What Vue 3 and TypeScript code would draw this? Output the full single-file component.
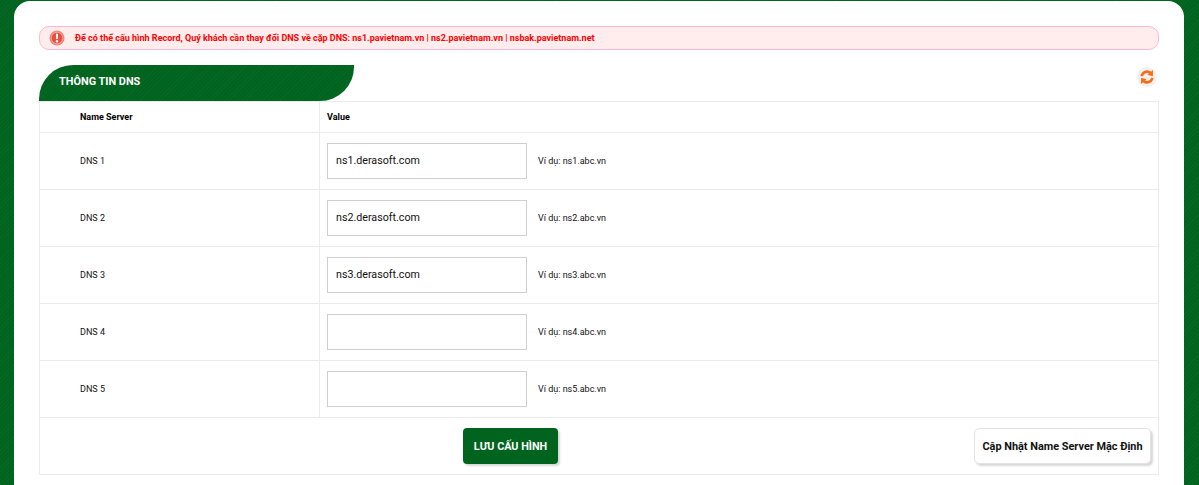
<script setup lang="ts">
const rows = [
  { name: 'DNS 1', value: 'ns1.derasoft.com', hint: 'Ví dụ: ns1.abc.vn' },
  { name: 'DNS 2', value: 'ns2.derasoft.com', hint: 'Ví dụ: ns2.abc.vn' },
  { name: 'DNS 3', value: 'ns3.derasoft.com', hint: 'Ví dụ: ns3.abc.vn' },
  { name: 'DNS 4', value: '', hint: 'Ví dụ: ns4.abc.vn' },
  { name: 'DNS 5', value: '', hint: 'Ví dụ: ns5.abc.vn' },
]
</script>

<template>
  <div class="page">
    <div class="card">
      <div class="alert">
        <svg class="alert-icon" width="16" height="16" viewBox="0 0 16 16">
          <circle cx="8" cy="8" r="7.5" fill="#f0837a" />
          <circle cx="8" cy="8" r="5.8" fill="#e8503f" stroke="#f8b0a8" stroke-width="0.8" />
          <rect x="7" y="3.6" width="2" height="5.6" rx="0.9" fill="#fff" />
          <circle cx="8" cy="11.2" r="1.2" fill="#fff" />
        </svg>
        <span>Để có thể cấu hình Record, Quý khách cần thay đổi DNS về cặp DNS: ns1.pavietnam.vn | ns2.pavietnam.vn | nsbak.pavietnam.net</span>
      </div>

      <div class="section-head">
        <div class="tab">THÔNG TIN DNS</div>
        <div class="refresh">
          <svg width="16" height="16" viewBox="0 0 18 18" fill="none">
            <path d="M3 8 A6 6 0 0 1 13 4.6" stroke="#ff6a13" stroke-width="3" />
            <path d="M15.8 1.2 L15.6 8.2 L9.4 6.6 Z" fill="#ff6a13" />
            <path d="M15 10 A6 6 0 0 1 5 13.4" stroke="#ff6a13" stroke-width="3" />
            <path d="M2.2 16.8 L2.4 9.8 L8.6 11.4 Z" fill="#ff6a13" />
          </svg>
        </div>
      </div>

      <table class="dns">
        <thead>
          <tr>
            <th class="col-name">Name Server</th>
            <th class="col-value">Value</th>
          </tr>
        </thead>
        <tbody>
          <tr v-for="row in rows" :key="row.name">
            <td class="col-name">{{ row.name }}</td>
            <td class="col-value">
              <div class="field">
                <input class="input" type="text" :value="row.value" />
                <span class="hint">{{ row.hint }}</span>
              </div>
            </td>
          </tr>
          <tr>
            <td colspan="2" class="actions-cell">
              <div class="actions">
                <button class="btn-save" type="button">LƯU CẤU HÌNH</button>
                <button class="btn-default" type="button">Cập Nhật Name Server Mặc Định</button>
              </div>
            </td>
          </tr>
        </tbody>
      </table>
    </div>
  </div>
</template>

<style>
html, body {
  margin: 0;
  height: 100%;
  overflow: hidden;
  background: #00641f;
}
</style>

<style scoped>
.page {
  height: 485px;
  box-sizing: border-box;
  padding: 1px 15px 0 14px;
  overflow: hidden;
  font-family: Roboto, "Liberation Sans", sans-serif;
  background-color: #00641f;
  background-image: repeating-linear-gradient(135deg, rgba(255, 255, 255, 0.025) 0 1px, transparent 1px 3px);
}
.card {
  background: #fff;
  border-radius: 16px 16px 0 0;
  padding: 25px 25px 40px;
  height: 600px;
  box-sizing: border-box;
}
.alert {
  height: 24px;
  box-sizing: border-box;
  border: 1px solid #ffb8d4;
  border-radius: 10px;
  background: #ffecec;
  color: #ff0000;
  font-size: 9px;
  font-weight: 700;
  display: flex;
  align-items: center;
  padding-left: 9px;
  gap: 10px;
}
.alert-icon {
  flex: none;
}
.section-head {
  margin-top: 15px;
  display: flex;
  justify-content: space-between;
  height: 36px;
}
.tab {
  width: 315px;
  height: 36px;
  box-sizing: border-box;
  padding-left: 20px;
  line-height: 34px;
  color: #fff;
  font-size: 10.9px;
  font-weight: 700;
  border-radius: 34px 0 34px 0;
  background-color: #00641f;
  background-image: repeating-linear-gradient(135deg, rgba(255, 255, 255, 0.025) 0 1px, transparent 1px 3px);
}
.refresh {
  width: 20px;
  height: 20px;
  margin: 2px 2px 0 0;
  border-radius: 50%;
  background: #f1f1f1;
  display: flex;
  align-items: center;
  justify-content: center;
}
.dns {
  width: 100%;
  table-layout: fixed;
  border-collapse: collapse;
  font-size: 9px;
  color: #111;
}
.dns th,
.dns td {
  border: 1px solid #ebebeb;
  padding: 0;
  text-align: left;
}
.dns th {
  height: 30px;
  font-weight: 700;
  color: #000;
}
.dns td {
  height: 56px;
}
.col-name {
  width: 280px;
  padding-left: 40px !important;
  box-sizing: border-box;
}
.col-value {
  padding-left: 7px !important;
}
.field {
  display: flex;
  align-items: center;
  gap: 11px;
}
.input {
  width: 200px;
  height: 36px;
  box-sizing: border-box;
  border: 1px solid #cfcfcf;
  padding: 0 9px 2px 8px;
  margin: 0;
  outline: none;
  font-family: Roboto, "Liberation Sans", sans-serif;
  font-size: 10.7px;
  color: #111;
  background: #fff;
}
.hint {
  color: #111;
}
.actions-cell {
  height: 56px;
}
.actions {
  display: flex;
  align-items: center;
  padding: 0 7px 0 423px;
}
.btn-save {
  width: 95px;
  height: 36px;
  border: 0;
  border-radius: 4px;
  background: #00641f;
  color: #fff;
  font-family: Roboto, "Liberation Sans", sans-serif;
  font-size: 10.8px;
  font-weight: 700;
  box-shadow: 2px 2px 2px #d8d8d8;
  padding: 0;
}
.btn-default {
  margin-left: auto;
  width: 177px;
  height: 36px;
  border: 1px solid #e3e3e3;
  border-radius: 5px;
  background: #fff;
  color: #111;
  font-family: Roboto, "Liberation Sans", sans-serif;
  font-size: 10.9px;
  font-weight: 700;
  box-shadow: 2px 2px 2px #d8d8d8;
  padding: 0;
}
</style>
